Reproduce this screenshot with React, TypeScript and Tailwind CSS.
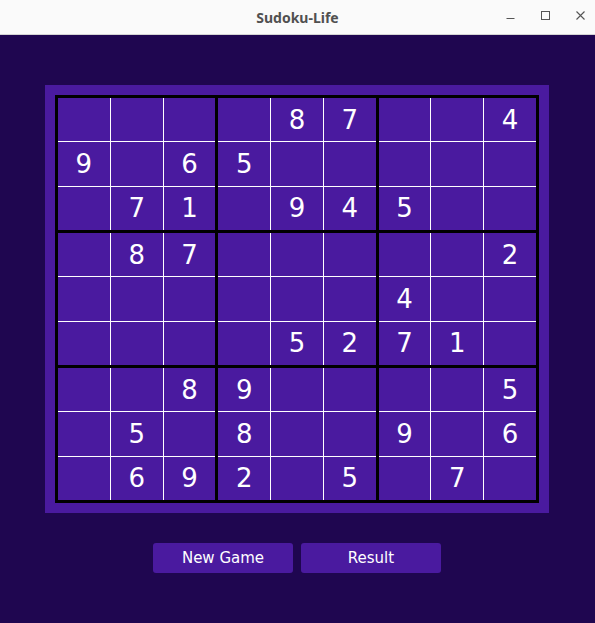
import React from "react";

const board: string[] = [
  "000087004",
  "906500000",
  "071094500",
  "087000002",
  "000000400",
  "000052710",
  "008900005",
  "050800906",
  "069205070",
];

function Box({ br, bc }: { br: number; bc: number }) {
  const cells: string[] = [];
  for (let r = 0; r < 3; r++) {
    for (let c = 0; c < 3; c++) {
      const v = board[br * 3 + r][bc * 3 + c];
      cells.push(v === "0" ? "" : v);
    }
  }
  return (
    <div className="grid grid-cols-3 grid-rows-3 gap-px bg-white">
      {cells.map((v, i) => (
        <div
          key={i}
          className="flex items-center justify-center bg-[#4a1a9f] text-[26px] leading-none text-white"
        >
          {v}
        </div>
      ))}
    </div>
  );
}

export default function App() {
  return (
    <div className="flex h-[623px] w-[595px] flex-col overflow-hidden font-['DejaVu_Sans',sans-serif]">
      {/* window title bar */}
      <div className="relative flex h-[35px] shrink-0 items-center justify-center border-b border-[#d4d4d4] bg-[#fafafa]">
        <span className="font-['Noto_Sans',sans-serif] text-[14px] font-bold text-[#505050]">
          Sudoku-Life
        </span>
        <div className="absolute right-[10px] top-[11px] flex items-center gap-[26px] text-[#555]">
          <svg width="9" height="9" viewBox="0 0 9 9">
            <path d="M0.5 7.5h8" stroke="currentColor" strokeWidth="1" />
          </svg>
          <svg width="9" height="9" viewBox="0 0 9 9">
            <rect x="0.5" y="0.5" width="8" height="8" fill="none" stroke="currentColor" strokeWidth="1" />
          </svg>
          <svg width="9" height="9" viewBox="0 0 9 9">
            <path d="M0.5 0.5l8 8M8.5 0.5l-8 8" stroke="currentColor" strokeWidth="1.1" />
          </svg>
        </div>
      </div>

      <div className="flex flex-1 flex-col items-center bg-[#1f0650] pr-px pt-[50px]">
        <div className="bg-[#4a1a9f] p-[10px]">
          <div className="grid h-[408px] w-[484px] grid-cols-3 grid-rows-3 gap-[3px] bg-black p-[3px]">
            {[0, 1, 2].map((br) =>
              [0, 1, 2].map((bc) => <Box key={`${br}-${bc}`} br={br} bc={bc} />)
            )}
          </div>
        </div>

        <div className="mt-[30px] flex gap-2">
          <button className="h-[30px] w-[140px] rounded-[3px] bg-[#4a1a9f] text-[15px] text-white">
            New Game
          </button>
          <button className="h-[30px] w-[140px] rounded-[3px] bg-[#4a1a9f] text-[15px] text-white">
            Result
          </button>
        </div>
      </div>
    </div>
  );
}
